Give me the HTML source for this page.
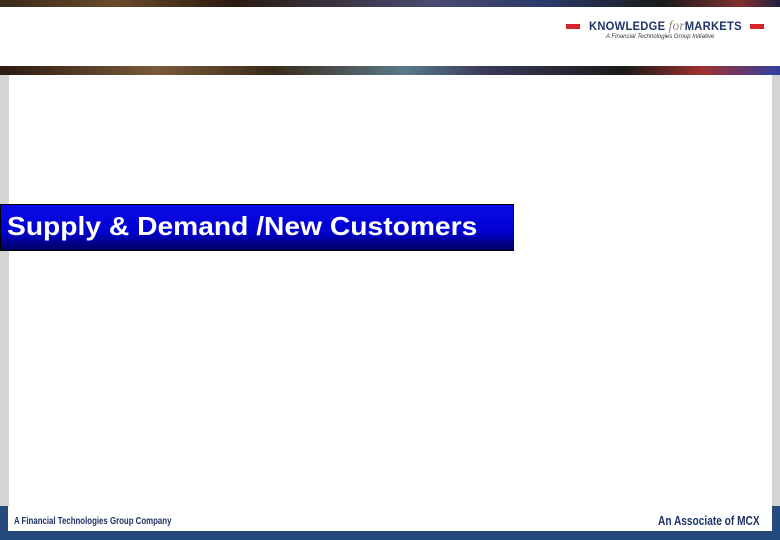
<!DOCTYPE html>
<html><head><style>
body{margin:0;width:780px;height:540px;position:relative;overflow:hidden;background:#fff;font-family:"Liberation Sans",sans-serif}
.a{position:absolute}
</style></head><body>
<div class="a" style="left:0;top:0;width:780px;height:7px;background:linear-gradient(90deg,#3a2a1a,#6a4a2a 15%,#2a1a10 30%,#4a4a70 55%,#2a3a6a 70%,#1a1a1a 85%,#803030 95%,#202040)"></div>
<div class="a" style="left:0;top:66px;width:780px;height:9px;background:linear-gradient(90deg,#2a1a10,#7a5a3a 20%,#3a2a1a 35%,#5a7a8a 52%,#3a3a5a 62%,#1a1a1a 80%,#a03030 90%,#3040a0)"></div>
<div class="a" style="left:0;top:75px;width:9px;height:432px;background:#d4d4d4"></div>
<div class="a" style="left:772px;top:75px;width:8px;height:432px;background:#d4d4d4"></div>
<div class="a" style="left:566px;top:24px;width:14px;height:5px;background:#d8232a"></div>
<div class="a" style="left:750px;top:24px;width:14px;height:5px;background:#d8232a"></div>
<div class="a" style="left:589px;top:19px;font-size:12px;font-weight:bold;color:#1f3466;letter-spacing:0.3px;white-space:nowrap;transform:scaleX(0.93);transform-origin:left">KNOWLEDGE <i style="font-family:'Liberation Serif',serif;font-weight:normal;color:#888;font-size:14px">for</i>MARKETS</div>
<div class="a" style="left:606px;top:34px;font-size:6px;font-style:italic;color:#333">A Financial Technologies Group Initiative</div>
<div class="a" style="left:0;top:204px;width:514px;height:47px;background:linear-gradient(180deg,#0a0ae8,#0000d0 60%,#000060);border:1px solid #000;box-sizing:border-box"></div>
<div class="a" style="left:7px;top:211px;font-size:26px;font-weight:bold;color:#fff;white-space:nowrap;transform:scaleX(1.085);transform-origin:left">Supply &amp; Demand /New Customers</div>
<div class="a" style="left:0;top:506px;width:780px;height:34px;background:#254b7d"></div>
<div class="a" style="left:8px;top:506px;width:764px;height:25px;background:#fff"></div>
<div class="a" style="left:14px;top:516px;font-size:10px;font-weight:bold;color:#1f3466;transform:scaleX(0.785);transform-origin:left;white-space:nowrap">A Financial Technologies Group Company</div>
<div class="a" style="left:658px;top:513px;font-size:13px;font-weight:bold;color:#1f3466;transform:scaleX(0.78);transform-origin:left;white-space:nowrap">An Associate of MCX</div>
</body></html>
